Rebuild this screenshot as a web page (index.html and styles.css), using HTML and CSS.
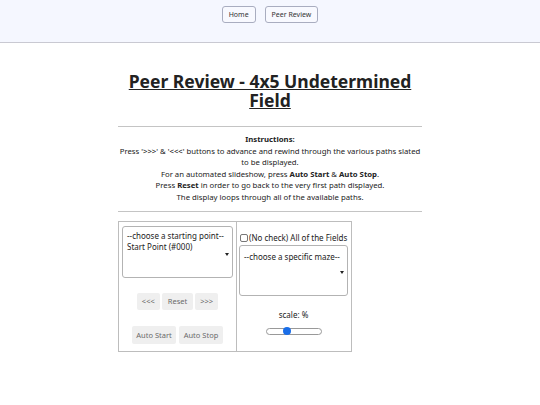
FILE: index.html
```html
<!DOCTYPE html>
<html>
<head>
<meta charset="utf-8">
<link rel="stylesheet" href="styles.css">
</head>
<body>
<header class="topbar">
  <button class="nav-btn">Home</button>
  <button class="nav-btn">Peer Review</button>
</header>
<main class="content">
  <h1 class="title">Peer Review - 4x5 Undetermined Field</h1>
  <hr class="rule">
  <div class="instructions">
    <div class="instr-head">Instructions:</div>
    <div>Press '&gt;&gt;&gt;' &amp; '&lt;&lt;&lt;' buttons to advance and rewind through the various paths slated to be displayed.</div>
    <div>For an automated slideshow, press <b>Auto Start</b> &amp; <b>Auto Stop</b>.</div>
    <div>Press <b>Reset</b> in order to go back to the very first path displayed.</div>
    <div>The display loops through all of the available paths.</div>
  </div>
  <hr class="rule">
  <div class="panel">
    <div class="cell cell-left">
      <div class="selectbox sel-left">
        <div class="sel-lines">
          <div>--choose a starting point--</div>
          <div>Start Point (#000)</div>
        </div>
        <span class="caret"></span>
      </div>
      <div class="btn-row row-nav">
        <button class="ctl-btn">&lt;&lt;&lt;</button>
        <button class="ctl-btn">Reset</button>
        <button class="ctl-btn">&gt;&gt;&gt;</button>
      </div>
      <div class="btn-row row-auto">
        <button class="ctl-btn">Auto Start</button>
        <button class="ctl-btn">Auto Stop</button>
      </div>
    </div>
    <div class="cell cell-right">
      <label class="check-line"><span class="checkbox"></span>(No check) All of the Fields</label>
      <div class="selectbox sel-right">
        <div class="sel-lines">
          <div>--choose a specific maze--</div>
        </div>
        <span class="caret"></span>
      </div>
      <div class="scale-label">scale: %</div>
      <div class="range">
        <span class="range-thumb"></span>
      </div>
    </div>
  </div>
</main>
</body>
</html>
```
FILE: styles.css
```css
* { box-sizing: border-box; }
body {
  margin: 0;
  font-family: "Noto Sans", "Open Sans", sans-serif;
  color: #222;
  background: #fff;
}
.topbar {
  height: 43px;
  background: #f5f7ff;
  border-bottom: 1px solid #c9c9d2;
  display: flex;
  justify-content: center;
  align-items: flex-start;
  gap: 9px;
  padding-top: 6px;
}
.nav-btn {
  font-family: "Noto Sans", sans-serif;
  font-size: 7px;
  color: #333;
  background: #f8f9ff;
  border: 1px solid #a9adc0;
  border-radius: 3px;
  height: 17px;
  padding: 0 6px;
}
.content {
  width: 304px;
  margin: 0 auto;
}
.title {
  margin: 29px 0 0;
  font-size: 17.5px;
  line-height: 19px;
  font-weight: 700;
  text-decoration: underline;
  text-align: center;
  color: #222;
}
.rule {
  border: 0;
  border-top: 1px solid #c4c4c4;
  margin: 16px 0 0;
}
.instructions {
  text-align: center;
  font-size: 7.75px;
  line-height: 11.6px;
  margin: 7px -2px 0;
  color: #222;
}
.instructions + .rule { margin-top: 7px; }
.instr-head { font-weight: 700; }
.panel {
  margin-top: 9px;
  width: 234px;
  height: 131px;
  border: 1px solid #bdbdbd;
  display: grid;
  grid-template-columns: 118px 1fr;
}
.cell { display: flex; flex-direction: column; }
.cell-left {
  border-right: 1px solid #bdbdbd;
  padding: 4px 3px 0 3px;
  align-items: stretch;
}
.cell-right {
  padding: 11px 3px 0 2px;
  align-items: stretch;
}
.selectbox {
  position: relative;
  border: 1px solid #b3b3b3;
  border-radius: 3px;
  font-size: 8px;
  line-height: 11px;
  color: #222;
  background: #fff;
}
.sel-left { height: 52px; padding: 3px 4px; }
.sel-right { height: 51px; padding: 5px 4px; margin-top: 2px; }
.caret {
  position: absolute;
  right: 3px;
  top: 50%;
  width: 0;
  height: 0;
  border-left: 2.5px solid transparent;
  border-right: 2.5px solid transparent;
  border-top: 3px solid #222;
}
.sel-left .caret { top: 26px; }
.sel-right .caret { top: 25px; }
.btn-row {
  display: flex;
  justify-content: center;
  gap: 2px;
}
.row-nav { margin-top: 15px; }
.row-auto { margin-top: 16px; gap: 3px; }
.ctl-btn {
  font-family: "Noto Sans", sans-serif;
  font-size: 7.5px;
  color: #6a6a6a;
  background: #efefef;
  border: 0;
  border-radius: 2px;
  height: 18px;
  padding: 0 6px;
}
.row-nav .ctl-btn { height: 17px; }
.row-nav .ctl-btn:first-child, .row-nav .ctl-btn:last-child { width: 23px; padding: 0; }
.row-auto .ctl-btn { width: 44px; padding: 0; }
.check-line {
  display: flex;
  align-items: center;
  font-size: 8px;
  line-height: 10px;
  color: #222;
  white-space: nowrap;
}
.checkbox {
  width: 8px;
  height: 8px;
  border: 1px solid #777;
  border-radius: 2px;
  margin: 0 1px 0 1px;
  background: #fff;
}
.scale-label {
  text-align: center;
  font-size: 8px;
  line-height: 11px;
  margin-top: 13px;
}
.range {
  position: relative;
  align-self: center;
  width: 56px;
  height: 7px;
  border: 1px solid #999;
  border-radius: 4px;
  margin-top: 8px;
  background: #fff;
}
.range-thumb {
  position: absolute;
  left: 16px;
  top: -1.5px;
  width: 8px;
  height: 8px;
  border-radius: 50%;
  background: #1a6ee8;
}
```
